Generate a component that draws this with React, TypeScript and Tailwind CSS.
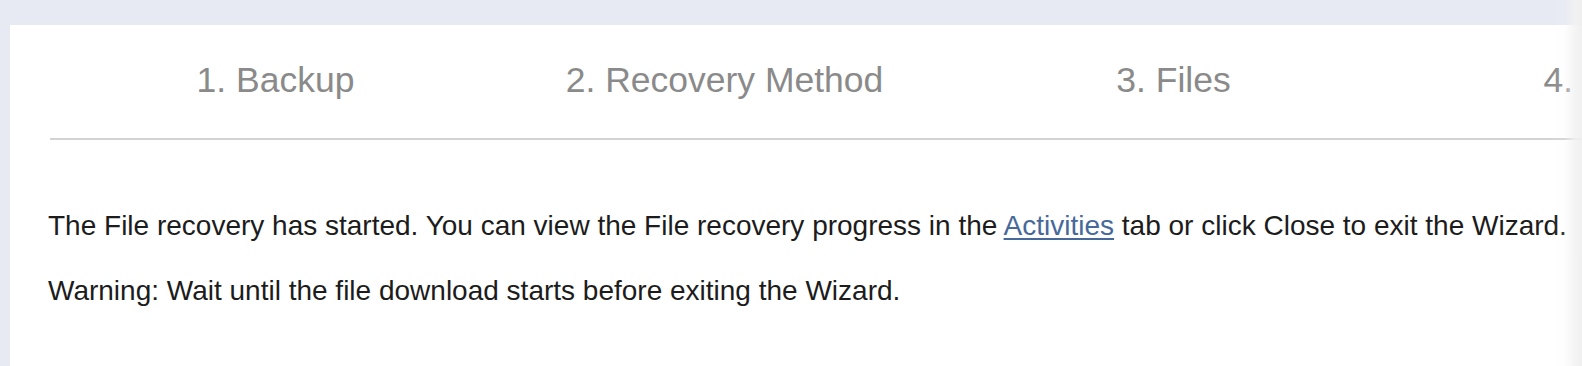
const STEPS = ['1. Backup', '2. Recovery Method', '3. Files', '4. Results']

export default function App() {
  return (
    <div className="relative h-[366px] w-[1582px] overflow-hidden bg-[#e7eaf3] pl-[10px] pt-[25px] font-['Liberation_Sans',Arial,sans-serif]">
      <div className="h-full w-[1900px] bg-white">
        <div className="ml-[40px] flex h-[115px] items-center border-b-2 border-[#d3d3d3] pb-[2px] pl-[1px]">
          {STEPS.map((step) => (
            <div key={step} className="w-[449px] shrink-0 text-center text-[35.5px] text-[#8a8a8a]">
              {step}
            </div>
          ))}
        </div>
        <div className="ml-[38px] pt-[66px] text-[28px] leading-[40px] text-[#1c1c1c]">
          <p>
            The File recovery has started. You can view the File recovery progress in the{' '}
            <a href="#" className="text-[#46699a] underline underline-offset-[3px]">
              Activities
            </a>{' '}
            tab or click Close to exit the Wizard.
          </p>
          <p className="mt-[25px]">Warning: Wait until the file download starts before exiting the Wizard.</p>
        </div>
      </div>
      <div className="absolute right-0 top-0 h-full w-[32px] bg-[linear-gradient(to_right,rgba(243,243,243,0)_0%,rgba(243,243,243,0.12)_45%,rgba(242,242,242,0.88)_80%,rgba(239,239,239,0.95)_100%)]" />
    </div>
  )
}
